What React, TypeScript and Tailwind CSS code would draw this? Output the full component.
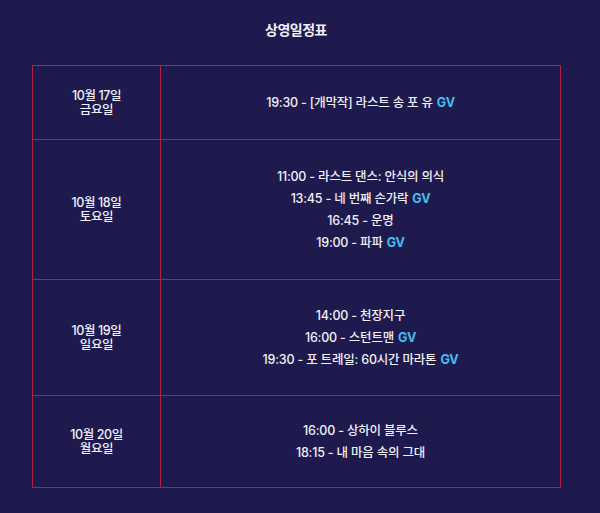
import React from "react";

type Item = { time: string; title: string; gv?: boolean };
type Row = { date: string; day: string; h: string; items: Item[] };

const rows: Row[] = [
  { date: "10월 17일", day: "금요일", h: "h-[73px]", items: [{ time: "19:30", title: "[개막작] 라스트 송 포 유", gv: true }] },
  {
    date: "10월 18일",
    day: "토요일",
    h: "h-[140px]",
    items: [
      { time: "11:00", title: "라스트 댄스: 안식의 의식" },
      { time: "13:45", title: "네 번째 손가락", gv: true },
      { time: "16:45", title: "운명" },
      { time: "19:00", title: "파파", gv: true },
    ],
  },
  {
    date: "10월 19일",
    day: "일요일",
    h: "h-[116px]",
    items: [
      { time: "14:00", title: "천장지구" },
      { time: "16:00", title: "스턴트맨", gv: true },
      { time: "19:30", title: "포 트레일: 60시간 마라톤", gv: true },
    ],
  },
  {
    date: "10월 20일",
    day: "월요일",
    h: "h-[92px]",
    items: [
      { time: "16:00", title: "상하이 블루스" },
      { time: "18:15", title: "내 마음 속의 그대" },
    ],
  },
];

export default function App() {
  return (
    <div
      className="w-[600px] h-[513px] bg-[#1f1a4e] text-[#f0eff6] flex flex-col"
      style={{ fontFamily: 'Inter, "Noto Sans CJK KR", "Noto Sans", sans-serif' }}
    >
      <h1 className="mt-[20px] self-center ml-[-8px] text-[14px] leading-[20px] font-bold tracking-[-0.5px]">상영일정표</h1>
      <div className="mt-[25px] ml-[32px] w-[529px] border border-[#b0223f] flex flex-col">
        {rows.map((r, i) => (
          <div key={i} className={`flex ${r.h} ${i > 0 ? "border-t border-[#b0223f]" : ""}`}>
            <div className="w-[128px] shrink-0 border-r border-[#b0223f] flex flex-col items-center justify-center text-[12.5px] leading-[14px] font-medium tracking-[-0.4px]">
              <div>{r.date}</div>
              <div>{r.day}</div>
            </div>
            <div className="flex-1 flex flex-col items-center justify-center text-[12.5px] leading-[22px] font-medium tracking-[-0.2px]">
              {r.items.map((it, j) => (
                <div key={j}>
                  {it.time} - {it.title}
                  {it.gv && <span className="ml-[4px] font-bold text-[#45bff0]">GV</span>}
                </div>
              ))}
            </div>
          </div>
        ))}
      </div>
    </div>
  );
}
